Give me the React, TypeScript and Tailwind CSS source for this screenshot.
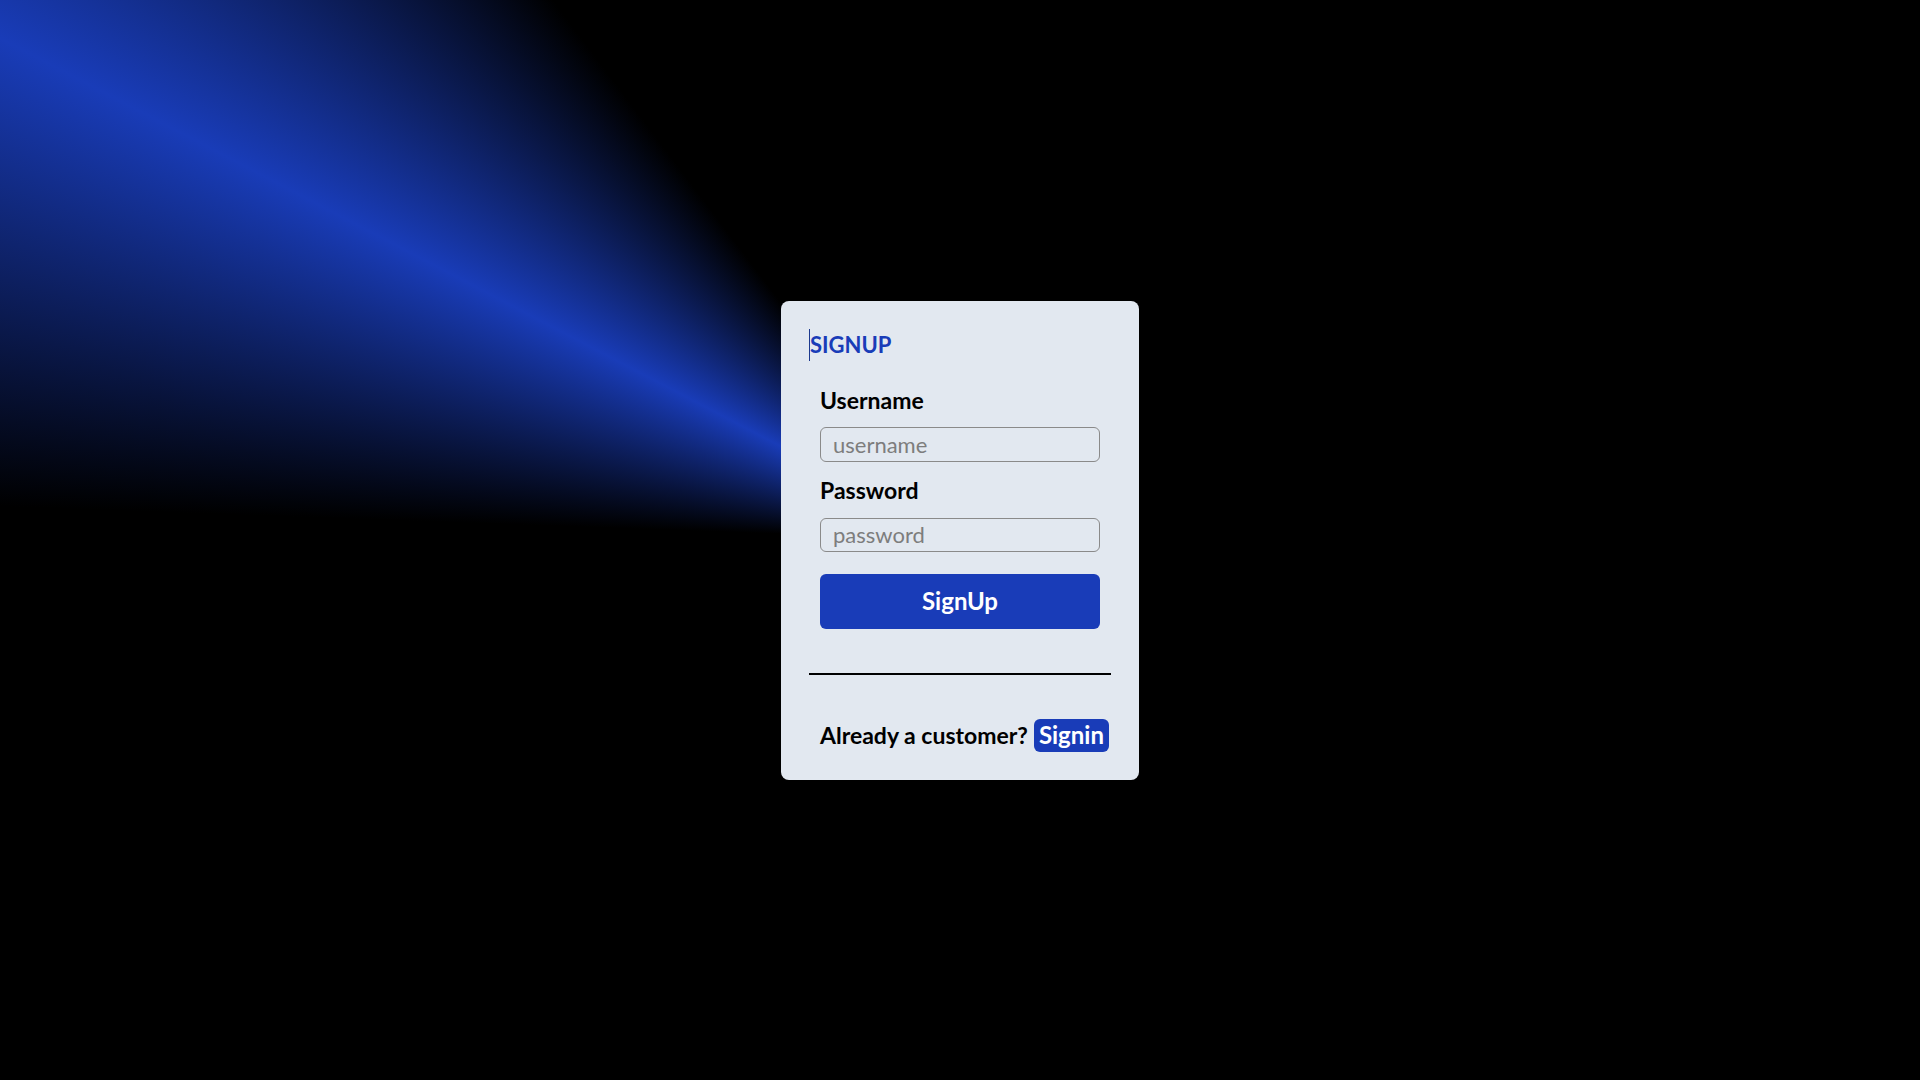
import React from 'react';

const App: React.FC = () => {
  return (
    <div className="min-h-screen w-full bg-black bg-[conic-gradient(from_270deg_at_50%_50%,#000_2deg,#193cb8_27.6deg,#000_53deg)] flex items-center justify-center font-['Lato',sans-serif]">
      {/* Card */}
      <div className="w-[358px] rounded-lg bg-slate-200 p-7">
        <h1 className="border-l border-blue-900 text-[22px] leading-8 font-bold text-blue-800">SIGNUP</h1>

        <form className="mt-[25px] flex flex-col px-[11px]" onSubmit={(e) => e.preventDefault()}>
          <label className="text-[23px] leading-7 font-bold text-black">Username</label>
          <input
            type="text"
            placeholder="username"
            className="mt-[13px] h-[35px] w-full rounded-md border border-[#8a8a8a] bg-transparent px-3 text-[22px] text-black placeholder:text-[#7d7d7d] outline-none"
          />
          <label className="mt-[14px] text-[23px] leading-7 font-bold text-black">Password</label>
          <input
            type="password"
            placeholder="password"
            className="mt-[14px] h-[34px] w-full rounded-md border border-[#8a8a8a] bg-transparent px-3 text-[22px] text-black placeholder:text-[#7d7d7d] outline-none"
          />
          <button className="mt-[22px] h-[55px] w-full rounded-md bg-blue-800 text-[24px] font-bold text-white">
            SignUp
          </button>
        </form>

        <hr className="mt-[44px] border-t-2 border-black" />

        {/* Footer */}
        <div className="mt-[44px] flex items-center gap-[6px] pl-[11px]">
          <span className="text-[23px] leading-7 font-bold text-black">Already a customer?</span>
          <a href="#" className="flex h-[33px] items-center rounded-md bg-blue-800 px-[5px] text-[24px] font-bold text-white">
            Signin
          </a>
        </div>
      </div>
    </div>
  );
};

export default App;
